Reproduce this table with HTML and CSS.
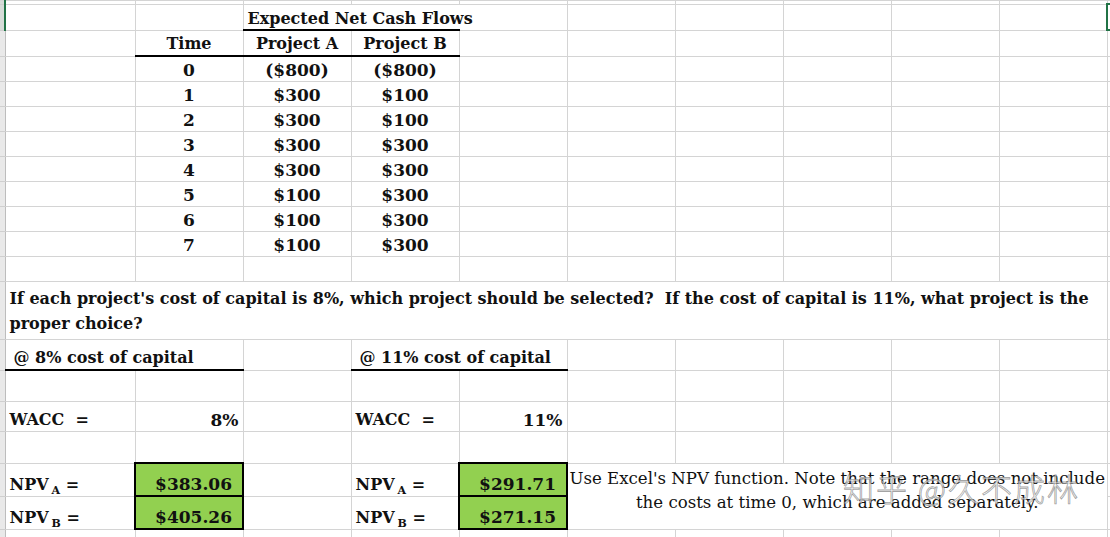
FILE: index.html
```html
<!DOCTYPE html>
<html lang="en">
<head>
<meta charset="utf-8">
<title>NPV</title>
<link rel="stylesheet" href="styles.css">
</head>
<body>
<div class="sheet">
<table class="grid">
  <colgroup>
    <col class="c-rh"><col class="c-a"><col class="c-n"><col class="c-n"><col class="c-n"><col class="c-n"><col class="c-n"><col class="c-n"><col class="c-n"><col class="c-n"><col class="c-n"><col class="c-k">
  </colgroup>
  <tr class="r-top"><td class="rh sel"></td><td></td><td></td><td></td><td></td><td></td><td></td><td></td><td></td><td></td><td></td><td></td></tr>
  <tr class="r25"><td class="rh sel"></td><td></td><td></td><td colspan="2" class="left thick-b title">Expected Net Cash Flows</td><td class="no-l"></td><td></td><td></td><td></td><td></td><td></td><td class="selcell"></td></tr>
  <tr class="r25"><td class="rh"></td><td></td><td class="center thick-b">Time</td><td class="center thick-b">Project A</td><td class="center thick-b">Project B</td><td></td><td></td><td></td><td></td><td></td><td></td><td></td></tr>
  <tr class="r25"><td class="rh"></td><td></td><td class="center num">0</td><td class="center num">($800)</td><td class="center num">($800)</td><td></td><td></td><td></td><td></td><td></td><td></td><td></td></tr>
  <tr class="r25"><td class="rh"></td><td></td><td class="center num">1</td><td class="center num">$300</td><td class="center num">$100</td><td></td><td></td><td></td><td></td><td></td><td></td><td></td></tr>
  <tr class="r25"><td class="rh"></td><td></td><td class="center num">2</td><td class="center num">$300</td><td class="center num">$100</td><td></td><td></td><td></td><td></td><td></td><td></td><td></td></tr>
  <tr class="r25"><td class="rh"></td><td></td><td class="center num">3</td><td class="center num">$300</td><td class="center num">$300</td><td></td><td></td><td></td><td></td><td></td><td></td><td></td></tr>
  <tr class="r25"><td class="rh"></td><td></td><td class="center num">4</td><td class="center num">$300</td><td class="center num">$300</td><td></td><td></td><td></td><td></td><td></td><td></td><td></td></tr>
  <tr class="r25"><td class="rh"></td><td></td><td class="center num">5</td><td class="center num">$100</td><td class="center num">$300</td><td></td><td></td><td></td><td></td><td></td><td></td><td></td></tr>
  <tr class="r25"><td class="rh"></td><td></td><td class="center num">6</td><td class="center num">$100</td><td class="center num">$300</td><td></td><td></td><td></td><td></td><td></td><td></td><td></td></tr>
  <tr class="r25"><td class="rh"></td><td></td><td class="center num">7</td><td class="center num">$100</td><td class="center num">$300</td><td></td><td></td><td></td><td></td><td></td><td></td><td></td></tr>
  <tr class="r25"><td class="rh"></td><td></td><td></td><td></td><td></td><td></td><td></td><td></td><td></td><td></td><td></td><td></td></tr>
  <tr class="r-q"><td class="rh"></td><td colspan="10" class="question">If each project's cost of capital is 8%, which project should be selected?&nbsp; If the cost of capital is 11%, what project is the<br>proper choice?</td><td></td></tr>
  <tr class="r-at"><td class="rh"></td><td colspan="2" class="left thick-b indent">@ 8% cost of capital</td><td></td><td colspan="2" class="left thick-b indent">@ 11% cost of capital</td><td></td><td></td><td></td><td></td><td></td><td></td></tr>
  <tr class="r-blank1"><td class="rh"></td><td></td><td></td><td></td><td></td><td></td><td></td><td></td><td></td><td></td><td></td><td></td></tr>
  <tr class="r-wacc"><td class="rh"></td><td class="left">WACC&nbsp; =</td><td class="right num">8%</td><td></td><td class="left">WACC&nbsp; =</td><td class="right num">11%</td><td></td><td></td><td></td><td></td><td></td><td></td></tr>
  <tr class="r-blank2"><td class="rh"></td><td></td><td></td><td></td><td></td><td></td><td></td><td></td><td></td><td></td><td></td><td></td></tr>
  <tr class="r-npv"><td class="rh"></td><td class="left">NPV<sub>A</sub> =</td><td class="npv num">$383.06</td><td></td><td class="left">NPV<sub>A</sub> =</td><td class="npv num">$291.71</td><td colspan="5" rowspan="2" class="note">Use Excel's NPV function. Note that the range does not include<br>the costs at time 0, which are added separately.</td><td></td></tr>
  <tr class="r-npv"><td class="rh"></td><td class="left">NPV<sub>B</sub> =</td><td class="npv num">$405.26</td><td></td><td class="left">NPV<sub>B</sub> =</td><td class="npv num">$271.15</td><td></td></tr>
  <tr class="r25"><td class="rh"></td><td></td><td></td><td></td><td></td><td></td><td></td><td></td><td></td><td></td><td></td><td></td></tr>
</table>
<div class="watermark">知乎 @久不成林</div>
</div>
</body>
</html>
```

FILE: styles.css
```css
html, body {
  margin: 0;
  padding: 0;
  background: #ffffff;
}
.sheet {
  position: relative;
  width: 1110px;
  height: 537px;
  overflow: hidden;
}
.grid {
  border-collapse: collapse;
  table-layout: fixed;
  width: 1116px;
  font-family: "DejaVu Serif", "Liberation Serif", serif;
  font-weight: bold;
  font-size: 16px;
  color: #111111;
}
.c-rh { width: 5px; }
.c-a { width: 130px; }
.c-n { width: 108px; }
.c-k { width: 9px; }
.grid td {
  border: 1px solid #d4d4d4;
  padding: 0 4px 1px 4px;
  vertical-align: bottom;
  white-space: nowrap;
  overflow: visible;
  line-height: 20px;
}
.grid td.title { padding-bottom: 0; }
.grid td.num { font-size: 17px; }
.r-top td { height: 2px; padding: 0; line-height: 0; }
.r25 td { height: 23px; }
.r-q td { height: 54px; }
.r-at td { height: 28px; }
.r-blank1 td { height: 29px; }
.r-wacc td { height: 28px; }
.r-blank2 td { height: 29px; }
.r-npv td { height: 30px; }
.grid td.rh {
  background: #e9e9e9;
  border-left: none;
  border-right: 1px solid #bdbdbd;
  border-bottom: 1px solid #cfcfcf;
  padding: 0;
}
.grid td.rh.sel {
  background: #d6dcd8;
  border-right: 2px solid #217346;
}
.grid td.selcell {
  border: 2px solid #217346;
  border-right: none;
}
.grid td.no-l { border-left-style: hidden; }
.left { text-align: left; }
.center { text-align: center; }
.right { text-align: right; }
.grid td.thick-b { border-bottom: 2px solid #000000; }
.indent { padding-left: 8px !important; }
.question {
  text-align: left;
  line-height: 25px !important;
  padding-bottom: 3px !important;
}
.grid td.npv {
  background: #92d050;
  border: 2px solid #000000;
  text-align: right;
  padding-right: 10px;
}
sub {
  font-size: 11px;
  vertical-align: -4px;
  line-height: 0;
  margin-left: 3px;
}
.grid td.note {
  font-weight: normal;
  font-size: 16.6px;
  text-align: center;
  vertical-align: top;
  line-height: 24px;
  padding: 3px 0 0 0;
}
.watermark {
  position: absolute;
  left: 843px;
  top: 471px;
  font-family: "Noto Sans CJK SC", sans-serif;
  font-size: 31px;
  font-weight: 300;
  letter-spacing: 2px;
  line-height: 34px;
  color: rgba(255, 255, 255, 0.7);
  -webkit-text-stroke: 0.8px rgba(110, 110, 110, 0.65);
  white-space: nowrap;
}
```
